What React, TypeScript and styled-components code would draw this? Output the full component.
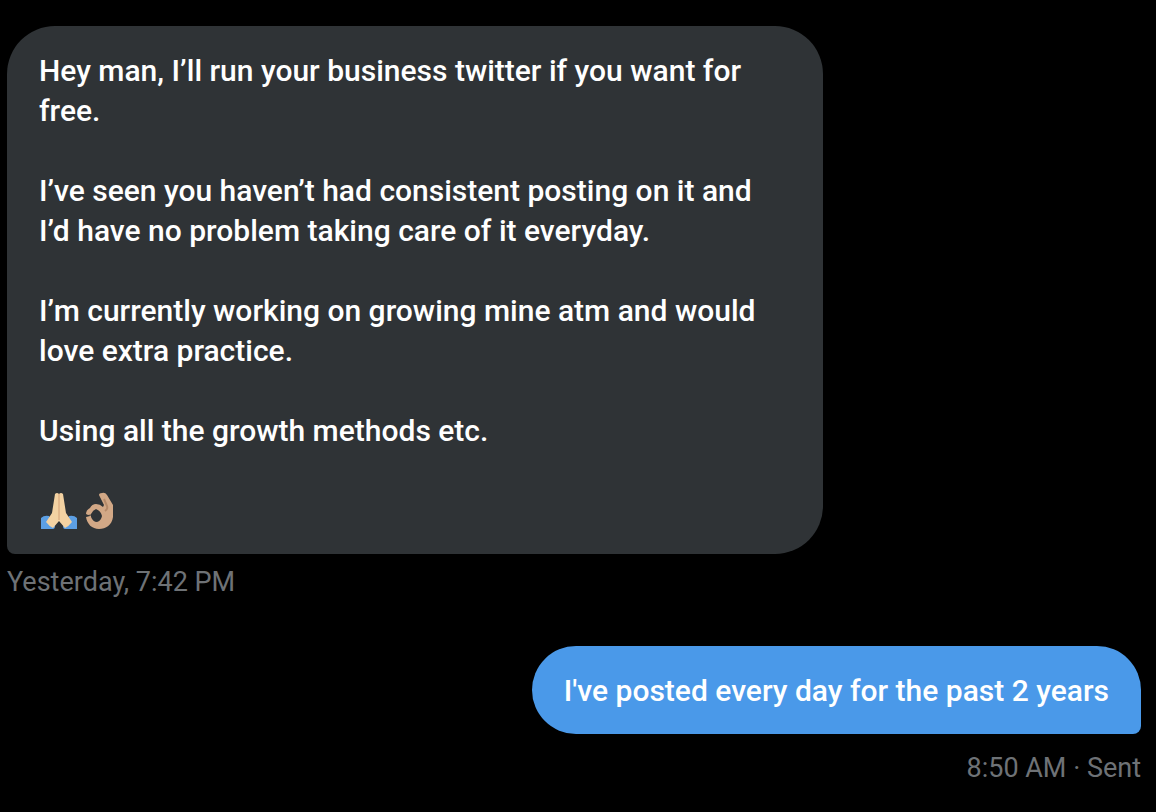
import React from "react";
import styled, { createGlobalStyle } from "styled-components";

const GlobalStyle = createGlobalStyle`
  body {
    margin: 0;
    background: #000;
    font-family: Roboto, "Liberation Sans", sans-serif;
  }
`;

const Conversation = styled.main`
  display: flex;
  flex-direction: column;
  gap: 44px;
  padding: 26px 15px 24px 7px;
`;

const Message = styled.article<{ $sent?: boolean }>`
  display: flex;
  flex-direction: column;
  align-items: ${(p) => (p.$sent ? "flex-end" : "flex-start")};
  gap: ${(p) => (p.$sent ? 14 : 8)}px;
`;

const Bubble = styled.div<{ $sent?: boolean }>`
  box-sizing: border-box;
  max-width: 72%;
  padding: 25px 32px 23px;
  border-radius: ${(p) => (p.$sent ? "44px 44px 8px 44px" : "48px 48px 48px 8px")};
  background: ${(p) => (p.$sent ? "#4a99e9" : "#2f3336")};
  color: #fff;
  font-size: 30px;
  font-weight: 500;
  line-height: 40px;
`;

const Paragraph = styled.p`
  margin: 0;

  & + & {
    margin-top: 40px;
  }
`;

const EmojiLine = styled(Paragraph)`
  display: flex;
  align-items: flex-start;
  gap: 4px;
  height: 40px;
  padding: 0 2px;
`;

const Emoji = styled.svg`
  width: 36px;
  height: 38px;
`;

const Meta = styled.footer`
  color: #6e7276;
  font-size: 27px;
  line-height: 40px;
`;

const FoldedHands = () => (
  <Emoji viewBox="0 0 36 38" role="img" aria-label="Folded hands">
    <path d="M0 27Q3 24 8 25L14 35Q14 38 12 38H0ZM36 27Q33 24 28 25L22 35Q22 38 24 38H36Z" fill="#5c9fe4" />
    <path d="M14 3Q16 1 18 3Q20 1 22 3L25 22L31 31Q28 35 24 37L18 30L12 37Q8 35 5 31L11 22Z" fill="#f3d2a2" />
    <path d="M18 3V29" stroke="#d2a077" fill="none" />
  </Emoji>
);

const OkHand = () => (
  <Emoji viewBox="0 0 36 38" role="img" aria-label="OK hand">
    <path
      fillRule="evenodd"
      d="M18 4Q18 2 21 2Q24 1 26 4L32 14V26C31 34 25 38 18 38C11 38 6 33 5 26L9 25L5 23Q5 19 9 17Q11 13 15 13Q19 13 22 16L23 14ZM10 23L10 26Q12 31 16 31Q20 30 21 25Q20 20 15 18Q12 19 10 23Z"
      fill="#d2a886"
    />
    <path d="M23 8L26 15Q27 18 24 20" stroke="#b58a69" strokeWidth="2" fill="none" />
    <path d="M4 25L10 24" stroke="#2f3336" strokeWidth="1" />
  </Emoji>
);

export default function App() {
  return (
    <>
      <GlobalStyle />
      <Conversation>
        <Message>
          <Bubble>
            <Paragraph>Hey man, I’ll run your business twitter if you want for free.</Paragraph>
            <Paragraph>
              I’ve seen you haven’t had consistent posting on it and
              <br />
              I’d have no problem taking care of it everyday.
            </Paragraph>
            <Paragraph>I’m currently working on growing mine atm and would love extra practice.</Paragraph>
            <Paragraph>Using all the growth methods etc.</Paragraph>
            <EmojiLine>
              <FoldedHands />
              <OkHand />
            </EmojiLine>
          </Bubble>
          <Meta>Yesterday, 7:42 PM</Meta>
        </Message>
        <Message $sent>
          <Bubble $sent>I've posted every day for the past 2 years</Bubble>
          <Meta>8:50 AM · Sent</Meta>
        </Message>
      </Conversation>
    </>
  );
}
